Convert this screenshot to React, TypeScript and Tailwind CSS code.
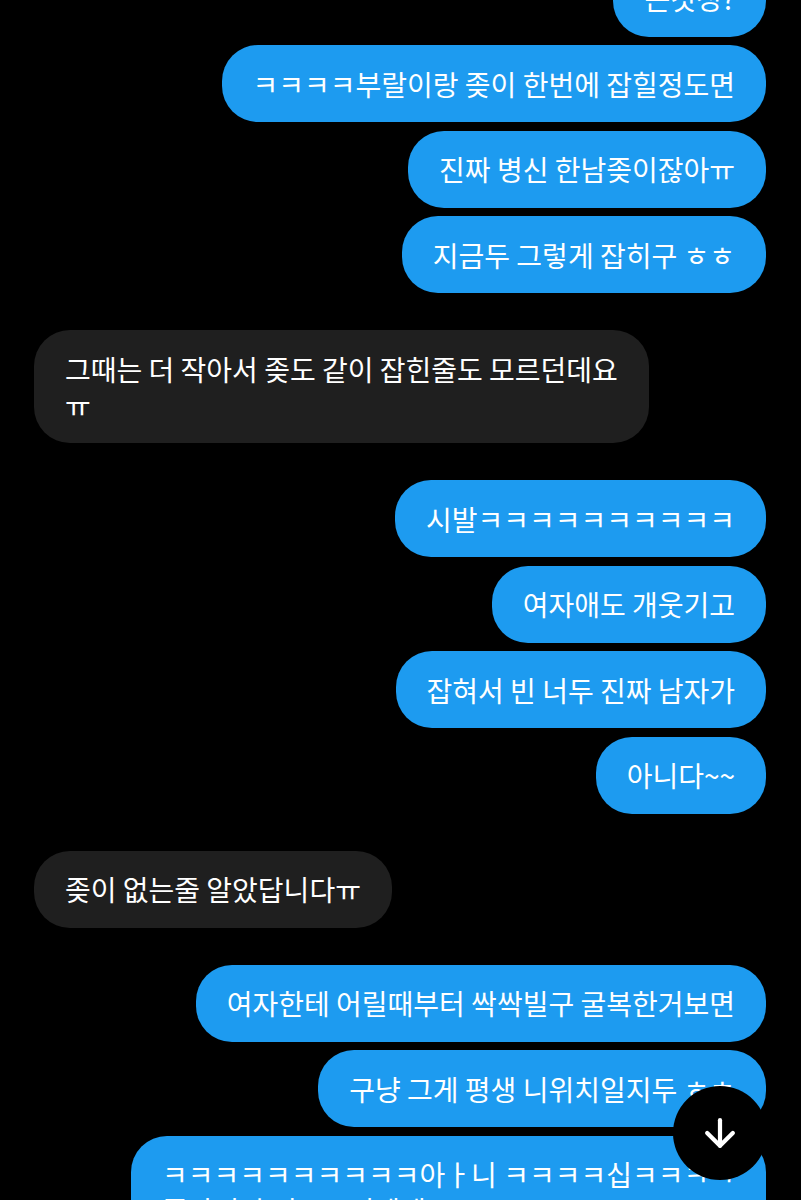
import { ArrowDown } from "lucide-react"

type Msg = { text: string; mine: boolean }

const groups: Msg[][] = [
  [
    { text: "큰것정?", mine: true },
    { text: "ㅋㅋㅋㅋ부랄이랑 좆이 한번에 잡힐정도면", mine: true },
    { text: "진짜 병신 한남좆이잖아ㅠ", mine: true },
    { text: "지금두 그렇게 잡히구 ㅎㅎ", mine: true },
  ],
  [{ text: "그때는 더 작아서 좆도 같이 잡힌줄도 모르던데요\nㅠ", mine: false }],
  [
    { text: "시발ㅋㅋㅋㅋㅋㅋㅋㅋㅋㅋ", mine: true },
    { text: "여자애도 개웃기고", mine: true },
    { text: "잡혀서 빈 너두 진짜 남자가", mine: true },
    { text: "아니다~~", mine: true },
  ],
  [{ text: "좆이 없는줄 알았답니다ㅠ", mine: false }],
  [
    { text: "여자한테 어릴때부터 싹싹빌구 굴복한거보면", mine: true },
    { text: "구냥 그게 평생 니위치일지두 ㅎㅎ", mine: true },
    { text: "ㅋㅋㅋㅋㅋㅋㅋㅋㅋㅋ아ㅏ니 ㅋㅋㅋㅋ십ㅋㅋㅋㅋ\n좆나진짜 니도그러겠네", mine: true },
  ],
]

function Bubble({ msg }: { msg: Msg }) {
  return (
    <div className={msg.mine ? "flex justify-end" : "flex justify-start"}>
      <div
        className={
          "max-w-[640px] whitespace-pre-line rounded-[36px] px-[31px] py-[20.5px] text-[28px] leading-[36px] text-white [font-feature-settings:'palt'] " +
          (msg.mine ? "bg-[#1d9bf0]" : "bg-[#1f1f1f]")
        }
      >
        {msg.text}
      </div>
    </div>
  )
}

export default function App() {
  return (
    <div
      className="relative h-[1200px] w-[801px] overflow-hidden bg-black"
      style={{ fontFamily: "'Noto Sans CJK KR', 'Noto Sans', sans-serif" }}
    >
      <div className="-mt-[40.5px] flex flex-col gap-[37px] pl-[34px] pr-[35px]">
        {groups.map((g, i) => (
          <div key={i} className="flex flex-col gap-[8.5px]">
            {g.map((m, j) => (
              <Bubble key={j} msg={m} />
            ))}
          </div>
        ))}
      </div>

      <button className="absolute right-[34px] top-[1086px] flex h-[94px] w-[94px] items-center justify-center rounded-full bg-black text-white">
        <ArrowDown size={44} strokeWidth={2.3} />
      </button>
    </div>
  )
}
